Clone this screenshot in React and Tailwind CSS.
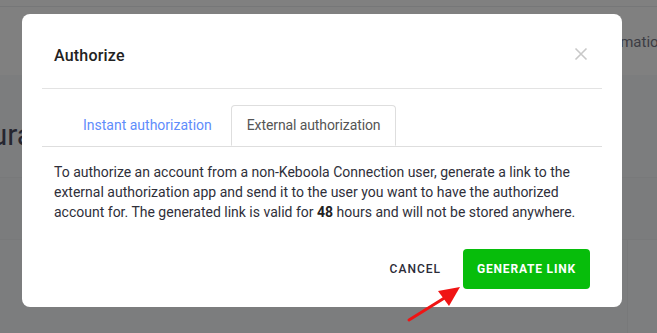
import React from "react";

export default function App() {
  return (
    <div className="relative w-[657px] h-[333px] overflow-hidden bg-[#7c7d7e] font-['Roboto',sans-serif]">
      {/* dimmed page underneath */}
      <div className="flex flex-col">
        <div className="h-[7px] bg-[#808080] border-b border-[#767778]" />
        <div className="h-[68px] bg-[#808080] flex items-center">
          <span className="ml-[589px] text-[15px] text-[#3c3c44] mb-[-2px] whitespace-nowrap">Information</span>
        </div>
        <div className="h-[103px] bg-[#7c7d7e] border-b border-[#78797a] flex items-center">
          <span className="text-[30px] text-[#262630] ml-[-96px] mt-[16px] whitespace-nowrap">Configuration</span>
        </div>
        <div className="h-[62px] bg-[#7b7c7d] border-b border-[#78797a]" />
        <div className="flex-1 flex">
          <div className="flex-1" />
          <div className="w-[30px] h-[150px] border-l border-[#78797a] bg-[#7d7e7f]" />
        </div>
      </div>

      {/* modal */}
      <div className="absolute left-[22px] top-[14px] w-[600px] h-[293px] rounded-lg bg-white flex flex-col">
        <div className="flex items-center justify-between pl-8 pr-[34px] pt-[30px] pb-[20px]">
          <h2 className="text-[16px] leading-6 font-medium text-[#222] tracking-[0.2px]">Authorize</h2>
          <svg width="14" height="14" viewBox="0 0 14 14" className="mt-[-4px]">
            <path d="M1.5 1.5 L12.5 12.5 M12.5 1.5 L1.5 12.5" stroke="#c8c8c8" strokeWidth="1.6" />
          </svg>
        </div>
        <div className="mx-5 border-t border-[#e3e3e3]" />
        <div className="mx-5 pt-4 border-b border-[#dedede] flex pl-[25px] gap-[3px]">
          <div className="h-[41px] px-4 flex items-center text-[14px] text-[#5f8dfb]">Instant authorization</div>
          <div className="h-[41px] mb-[-1px] px-[15px] flex items-center text-[14px] tracking-[-0.1px] text-[#555] bg-white border border-[#dedede] border-b-white rounded-t-[4px]">
            External authorization
          </div>
        </div>
        <p className="px-8 pt-[15px] text-[14px] leading-5 text-[#2f2f3a]">
          To authorize an account from a non-Keboola Connection user, generate a link to the external authorization app and send it to the user you want to have the authorized account for. The generated link is valid for <b className="font-bold text-[#222]">48</b> hours and will not be stored anywhere.
        </p>
        <div className="flex justify-end items-center gap-[6px] px-8 pt-[27px]">
          <button className="h-10 px-4 text-[12px] font-medium tracking-[1px] text-[#2c2c38]">CANCEL</button>
          <button className="h-10 w-[127px] rounded-[4px] bg-[#07bd0b] text-[12px] font-bold tracking-[0.8px] text-white">GENERATE LINK</button>
        </div>
      </div>

      {/* red arrow annotation */}
      <svg className="absolute left-0 top-0" width="657" height="333" viewBox="0 0 657 333">
        <line x1="409" y1="320" x2="446" y2="297" stroke="#f01414" strokeWidth="3" strokeLinecap="round" />
        <polygon points="460,287 438,291 449,306" fill="#f01414" />
      </svg>
    </div>
  );
}
